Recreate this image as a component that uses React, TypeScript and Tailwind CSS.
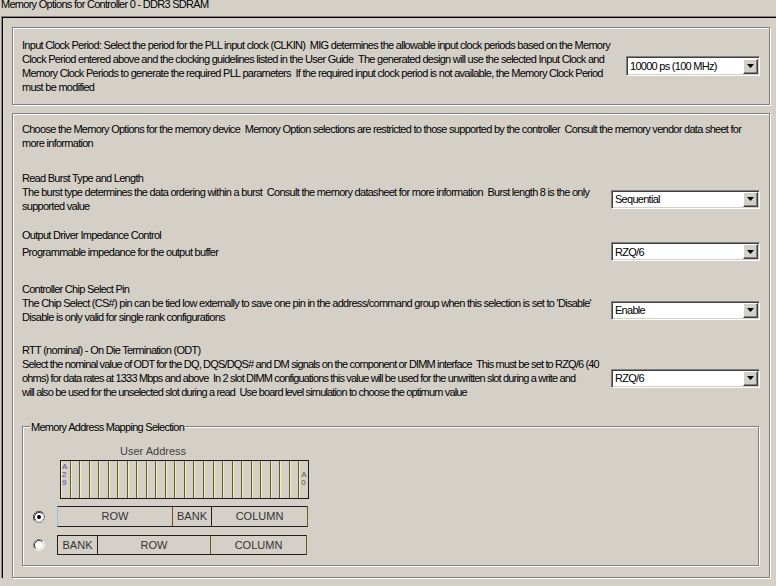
import React from 'react';

// Classic Windows-style MIG wizard page: memory options for the DDR3 controller.

const NARROW = "font-['Liberation_Sans',Arial,sans-serif] text-[11px] tracking-[-0.72px] text-black";
const SANS = "font-['Liberation_Sans',Arial,sans-serif] text-[11px]";

function cx(...c: (string | false | undefined)[]) {
  return c.filter(Boolean).join(' ');
}

function Arrow() {
  return (
    <div className="mr-px flex h-[15px] w-[15px] shrink-0 items-center justify-center border border-t-white border-l-white border-b-[#404040] border-r-[#404040] bg-[#d4d0c8] shadow-[inset_-1px_-1px_0_#808080]">
      <svg width="7" height="4" viewBox="0 0 7 4">
        <path d="M0 0h7L3.5 4z" fill="#000" />
      </svg>
    </div>
  );
}

function Combo({ value, className }: { value: string; className: string }) {
  return (
    <div
      className={cx(
        'flex shrink-0 items-center justify-between border border-t-[#808080] border-l-[#808080] border-b-white border-r-white bg-white shadow-[inset_1px_1px_0_#404040,inset_-1px_-1px_0_#d4d0c8]',
        className,
      )}
    >
      <span className={cx(NARROW, 'pl-[3px] leading-[14px] whitespace-pre')}>{value}</span>
      <Arrow />
    </div>
  );
}

function Lines({ lines, tight }: { lines: string[]; tight?: boolean }) {
  return (
    <div className={cx(NARROW, 'leading-[14px] whitespace-pre', tight && 'tracking-[-0.84px]')}>
      {lines.map((l, i) => (
        <div key={i}>{l}</div>
      ))}
    </div>
  );
}

function Radio({ checked }: { checked?: boolean }) {
  return (
    <svg width="12" height="12" viewBox="0 0 12 12" className="shrink-0">
      <circle cx="6" cy="6" r="5" fill="#fff" />
      <path d="M2.11 9.89A5.5 5.5 0 0 1 9.89 2.11" fill="none" stroke="#808080" />
      <path d="M9.89 2.11A5.5 5.5 0 0 1 2.11 9.89" fill="none" stroke="#fff" />
      <path d="M2.82 9.18A4.5 4.5 0 0 1 9.18 2.82" fill="none" stroke="#404040" />
      <path d="M9.18 2.82A4.5 4.5 0 0 1 2.82 9.18" fill="none" stroke="#d4d0c8" />
      {checked && (
        <>
          <circle cx="6" cy="6" r="5.5" fill="none" stroke="#000" strokeDasharray="1 1" />
          <circle cx="6" cy="6" r="2" fill="#000" />
        </>
      )}
    </svg>
  );
}

function Seg({ label, className }: { label: string; className: string }) {
  return (
    <div className={cx(SANS, 'flex items-center justify-center text-[#333] leading-none', className)}>{label}</div>
  );
}

const CELLS = Array.from({ length: 26 }, (_, i) => i);

export default function App() {
  return (
    <div className="h-[586px] w-[776px] overflow-hidden bg-[#d4d0c8]">
      <div className={cx(NARROW, 'h-[16px] pl-px leading-[9px] whitespace-pre')}>
        Memory Options for Controller 0 - DDR3 SDRAM
      </div>

      <div className="ml-px w-[800px] border-t border-l border-[#808080] pl-[10px] pt-[10px] shadow-[inset_1px_1px_0_#000]">
        {/* Input clock */}
        <div className="flex w-[758px] items-center border border-[#808080] pb-[10px] pl-[9px] pr-[9px] pt-[10px] shadow-[inset_1px_1px_0_#fff,1px_1px_0_#fff]">
          <div className="min-w-0 flex-1">
            <Lines
              lines={[
                'Input Clock Period: Select the period for the PLL input clock (CLKIN)  MIG determines the allowable input clock periods based on the Memory',
                'Clock Period entered above and the clocking guidelines listed in the User Guide  The generated design will use the selected Input Clock and',
                'Memory Clock Periods to generate the required PLL parameters  If the required input clock period is not available, the Memory Clock Period',
                'must be modified',
              ]}
            />
          </div>
          <Combo value="10000 ps (100 MHz)" className="h-[20px] w-[134px]" />
        </div>

        {/* Memory options */}
        <div className="mt-[8px] w-[758px] border border-[#808080] pb-[11px] pl-[9px] pr-[9px] pt-[8px] shadow-[inset_1px_1px_0_#fff,1px_1px_0_#fff]">
          <Lines
            lines={[
              'Choose the Memory Options for the memory device  Memory Option selections are restricted to those supported by the controller  Consult the memory vendor data sheet for',
              'more information',
            ]}
          />

          <div className="mt-[21px]">
            <Lines lines={['Read Burst Type and Length']} />
            <div className="flex items-center">
              <div className="min-w-0 flex-1">
                <Lines
                  lines={[
                    'The burst type determines the data ordering within a burst  Consult the memory datasheet for more information  Burst length 8 is the only',
                    'supported value',
                  ]}
                />
              </div>
              <Combo value="Sequential" className="h-[19px] w-[149px]" />
            </div>
          </div>

          <div className="mt-[15px]">
            <Lines lines={['Output Driver Impedance Control']} />
            <div className="flex items-center">
              <div className="min-w-0 flex-1">
                <Lines lines={['Programmable impedance for the output buffer']} />
              </div>
              <Combo value="RZQ/6" className="h-[19px] w-[149px]" />
            </div>
          </div>

          <div className="mt-[21px]">
            <Lines lines={['Controller Chip Select Pin']} />
            <div className="flex items-center">
              <div className="min-w-0 flex-1">
                <Lines
                  lines={[
                    "The Chip Select (CS#) pin can be tied low externally to save one pin in the address/command group when this selection is set to 'Disable'",
                    'Disable is only valid for single rank configurations',
                  ]}
                />
              </div>
              <Combo value="Enable" className="h-[19px] w-[149px]" />
            </div>
          </div>

          <div className="mt-[19px]">
            <Lines lines={['RTT (nominal) - On Die Termination (ODT)']} />
            <div className="flex items-center">
              <div className="min-w-0 flex-1">
                <Lines
                  tight
                  lines={[
                    'Select the nominal value of ODT for the DQ, DQS/DQS# and DM signals on the component or DIMM interface  This must be set to RZQ/6 (40',
                    'ohms) for data rates at 1333 Mbps and above  In 2 slot DIMM configuations this value will be used for the unwritten slot during a write and',
                    'will also be used for the unselected slot during a read  Use board level simulation to choose the optimum value',
                  ]}
                />
              </div>
              <Combo value="RZQ/6" className="h-[19px] w-[149px]" />
            </div>
          </div>

          {/* Address mapping group box */}
          <div className="relative mr-px mt-[27px] border border-[#808080] pb-[10px] pt-[17px] shadow-[inset_1px_1px_0_#fff,1px_1px_0_#fff]">
            <span className={cx(NARROW, 'absolute -top-[7px] left-[7px] bg-[#d4d0c8] px-px leading-[14px] whitespace-pre')}>
              Memory Address Mapping Selection
            </span>

            <div className={cx(SANS, 'ml-[97px] leading-[14px] text-[#404040]')}>User Address</div>

            <div className="ml-[37px] mt-[2px] flex h-[39px] w-[249px] border border-[#1a1a1a]">
              {CELLS.map((i) => (
                <div
                  key={i}
                  className={cx(
                    'relative flex-1 shadow-[inset_1px_0_0_#f2f2a0]',
                    i > 0 && 'border-l border-[#5c5c38]',
                  )}
                >
                  {i === 0 && (
                    <div className="pl-px pt-[2px] font-['Liberation_Sans',sans-serif] text-[8px] leading-[8px] text-[#4848a0]">
                      A<br />2<br />9
                    </div>
                  )}
                  {i === 25 && (
                    <div className="pl-[2px] pt-[10px] font-['Liberation_Sans',sans-serif] text-[8px] leading-[8px] text-[#555540]">
                      A<br />0
                    </div>
                  )}
                </div>
              ))}
            </div>

            <div className="ml-[10px] mt-[7px] flex items-center gap-[12px]">
              <Radio checked />
              <div className="flex h-[21px] w-[251px] border border-[#202020] border-l-[#8cc4e4] border-r-[#5a6a10]">
                <Seg label="ROW" className="w-[114px]" />
                <Seg label="BANK" className="w-[39px] border-l border-[#7a4a1a]" />
                <Seg label="COLUMN" className="flex-1 border-l border-[#202020]" />
              </div>
            </div>

            <div className="ml-[10px] mt-[8px] flex items-center gap-[12px]">
              <Radio />
              <div className="flex h-[20px] w-[250px] border border-[#202020] border-r-[#5a6a10]">
                <Seg label="BANK" className="w-[39px]" />
                <Seg label="ROW" className="w-[113px] border-l border-[#202020]" />
                <Seg label="COLUMN" className="flex-1 border-l border-[#5a6a10]" />
              </div>
            </div>
          </div>
        </div>
      </div>
    </div>
  );
}
